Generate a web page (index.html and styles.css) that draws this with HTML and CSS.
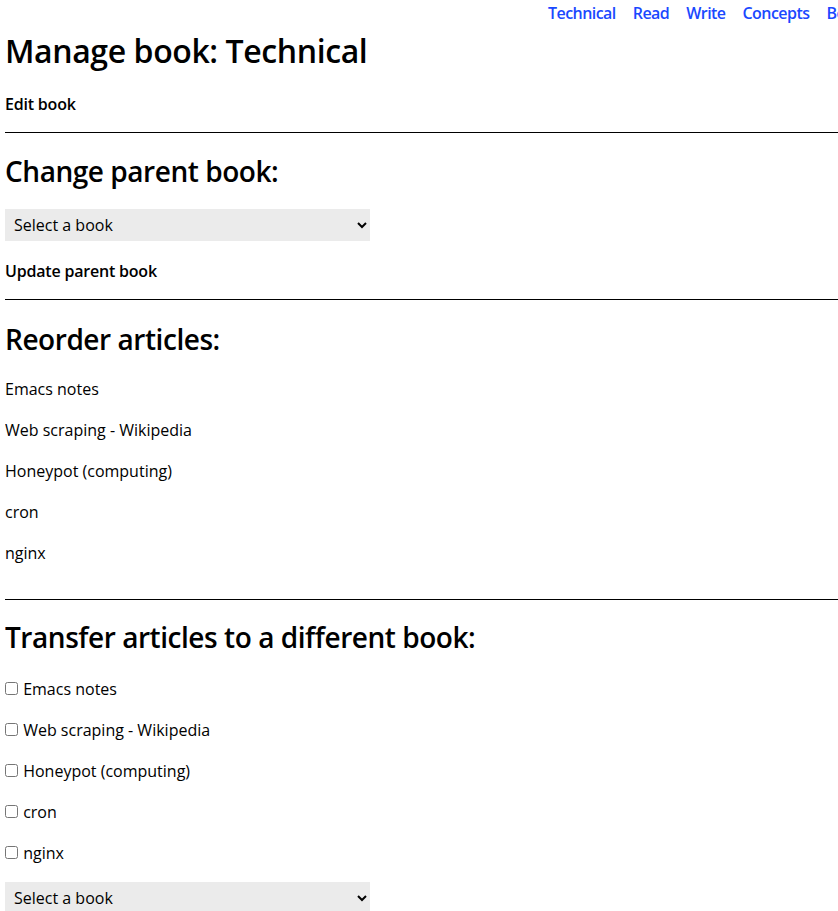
FILE: index.html
```html
<!DOCTYPE html>
<html lang="en">
<head>
<meta charset="utf-8">
<title>Manage book: Technical</title>
<link rel="stylesheet" href="styles.css">
</head>
<body>
<nav class="topnav">
  <a href="#">Technical</a>
  <a href="#">Read</a>
  <a href="#">Write</a>
  <a href="#">Concepts</a>
  <a href="#">Books</a>
</nav>
<h1 class="title">Manage book: Technical</h1>
<div class="action">Edit book</div>
<hr class="rule rule-first">
<h2 class="section-title">Change parent book:</h2>
<select class="book-select"><option>Select a book</option></select>
<div class="action action-update">Update parent book</div>
<hr class="rule">
<h2 class="section-title section-reorder">Reorder articles:</h2>
<div class="article-list">
  <div class="article">Emacs notes</div>
  <div class="article">Web scraping - Wikipedia</div>
  <div class="article">Honeypot (computing)</div>
  <div class="article">cron</div>
  <div class="article">nginx</div>
</div>
<hr class="rule rule-after-list">
<h2 class="section-title section-transfer">Transfer articles to a different book:</h2>
<div class="article-list article-list-check">
  <label class="article"><input type="checkbox" class="check"> Emacs notes</label>
  <label class="article"><input type="checkbox" class="check"> Web scraping - Wikipedia</label>
  <label class="article"><input type="checkbox" class="check"> Honeypot (computing)</label>
  <label class="article"><input type="checkbox" class="check"> cron</label>
  <label class="article"><input type="checkbox" class="check"> nginx</label>
</div>
<select class="book-select book-select-last"><option>Select a book</option></select>
</body>
</html>
```
FILE: styles.css
```css
html {
  overflow: hidden;
}
body {
  margin: 0 0 0 5px;
  font-family: "Open Sans", "Noto Sans", sans-serif;
  font-size: 16px;
  color: #000;
  background: #fff;
}
.topnav {
  display: flex;
  gap: 17px;
  padding-left: 543px;
  height: 26px;
  line-height: 26px;
  white-space: nowrap;
}
.topnav a {
  color: #1a48ff;
  font-weight: 600;
  letter-spacing: -0.55px;
  text-decoration: none;
}
.title {
  margin: 5px 0 0;
  font-size: 32px;
  line-height: 40px;
  font-weight: 600;
  letter-spacing: -0.4px;
}
.action {
  margin-top: 21px;
  font-weight: 600;
  letter-spacing: -0.2px;
  line-height: 24px;
}
.action-update {
  margin-top: 18px;
}
.rule {
  margin: 16px 0 0;
  border: 0;
  border-top: 1px solid #000;
  height: 0;
}
.section-title {
  margin: 22px 0 0;
  font-size: 28px;
  line-height: 32px;
  font-weight: 600;
  letter-spacing: -0.45px;
}
.section-reorder {
  margin-top: 23px;
}
.section-transfer {
  margin-top: 21px;
}
.book-select {
  display: block;
  margin-top: 22px;
  width: 365px;
  height: 32px;
  border: 0;
  border-radius: 0;
  background: #ebebeb;
  font-family: inherit;
  font-size: 16px;
  padding: 0 4px 0 5px;
  color: #000;
}
.book-select-last {
  margin-top: 17px;
}
.article-list {
  display: flex;
  flex-direction: column;
  gap: 17px;
  margin-top: 22px;
}
.article-list-check {
  margin-top: 24px;
}
.article {
  display: block;
  line-height: 24px;
}
.rule-after-list {
  margin-top: 34px;
}
.check {
  margin: 0 1px 0 0;
  width: 13px;
  height: 13px;
}
```
